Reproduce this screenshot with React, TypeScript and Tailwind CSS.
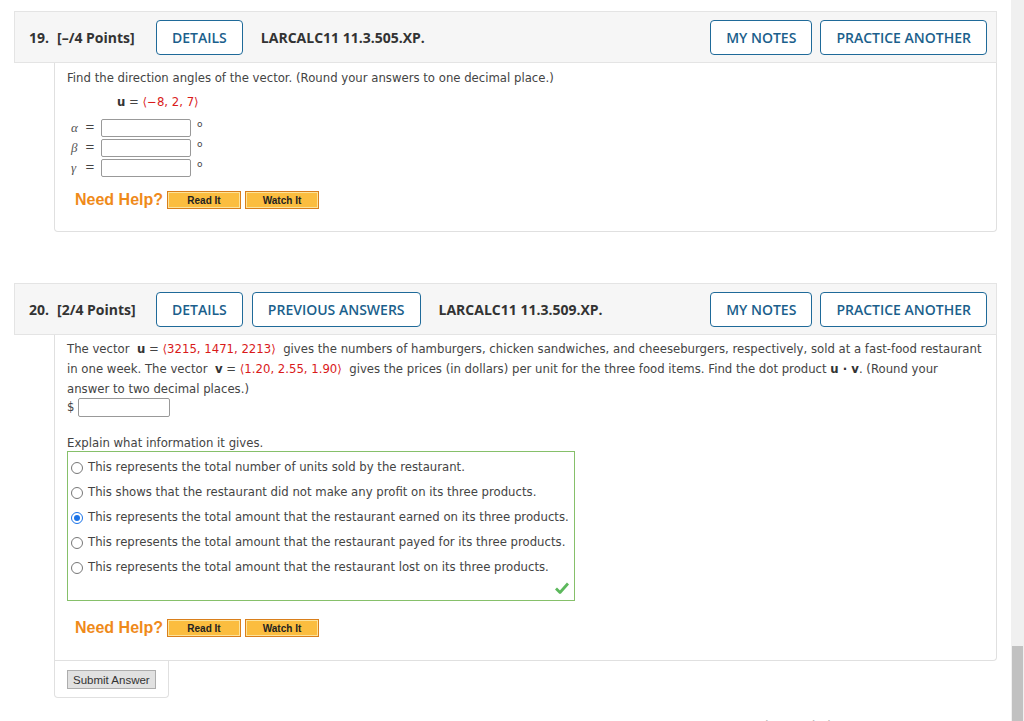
import React from "react"

const hdrBtn =
  "h-[35px] px-[15px] border-[1.5px] border-[#1f6a99] rounded-[4px] bg-white text-[#1b5f8c] text-[14px] font-semibold flex items-center"

function Header({ num, pts, code, prev }: { num: string; pts: string; code: string; prev?: boolean }) {
  return (
    <div className="ml-[14px] w-[983px] h-[52px] bg-[#f6f6f6] border border-[#e4e4e4] flex items-center pl-[14px] pr-[9px] font-['Open_Sans',sans-serif]">
      <span className="text-[14px] font-bold text-[#333] w-[127px] flex gap-[8px]">
        <span>{num}</span>
        <span>{pts}</span>
      </span>
      <button className={hdrBtn}>DETAILS</button>
      {prev && <button className={hdrBtn + " ml-[9px]"}>PREVIOUS ANSWERS</button>}
      <span className="ml-[18px] text-[14px] font-bold text-[#333]">{code}</span>
      <div className="ml-auto flex gap-[8px]">
        <button className={hdrBtn}>MY NOTES</button>
        <button className={hdrBtn}>PRACTICE ANOTHER</button>
      </div>
    </div>
  )
}

function HelpRow() {
  const b =
    "w-[74px] h-[18px] bg-[#fbbd3f] border border-[#d97f1c] shadow-[inset_0_0_0_1px_#fde39b] text-[10px] font-bold text-[#222] font-['Liberation_Sans',Arial,sans-serif] flex items-center justify-center"
  return (
    <div className="flex items-center pl-[8px]">
      <span className="text-[#ef8a1a] font-bold text-[16px] font-['Liberation_Sans',Arial,sans-serif] w-[92px]">Need Help?</span>
      <button className={b}>Read It</button>
      <button className={b + " ml-[4px]"}>Watch It</button>
    </div>
  )
}

function Radio({ on }: { on?: boolean }) {
  return on ? (
    <span className="w-[12px] h-[12px] rounded-full border-[1.5px] border-[#1a73e8] flex items-center justify-center">
      <span className="w-[6px] h-[6px] rounded-full bg-[#1a73e8]" />
    </span>
  ) : (
    <span className="w-[12px] h-[12px] rounded-full border border-[#777] bg-white" />
  )
}

const red = "text-[#d91a1a]"

export default function App() {
  const opts = [
    "This represents the total number of units sold by the restaurant.",
    "This shows that the restaurant did not make any profit on its three products.",
    "This represents the total amount that the restaurant earned on its three products.",
    "This represents the total amount that the restaurant payed for its three products.",
    "This represents the total amount that the restaurant lost on its three products.",
  ]
  return (
    <div className="w-[1024px] h-[721px] overflow-hidden bg-white flex">
      <div className="w-[1011px] relative font-[DejaVu_Sans,Verdana,sans-serif] text-[11.7px] text-[#444]">
        <div className="h-[11px]" />
        <Header num="19." pts="[–/4 Points]" code="LARCALC11 11.3.505.XP." />
        <div className="ml-[54px] w-[943px] h-[169px] border border-t-0 border-[#e0e0e0] rounded-b-[4px] pl-[12px] pt-[6px]">
          <div className="leading-[18px]">Find the direction angles of the vector. (Round your answers to one decimal place.)</div>
          <div className="mt-[6px] ml-[50px] leading-[18px]">
            <b className="text-[#333]">u</b> = <span className={red}>⟨−8, 2, 7⟩</span>
          </div>
          <div className="mt-[8px] flex flex-col gap-[2px]">
            {["α", "β", "γ"].map((g) => (
              <div key={g} className="flex items-center h-[18px]">
                <span className="w-[18px] pl-[4px] italic font-['Liberation_Serif',serif] text-[13px] text-[#555]">{g}</span>
                <span className="w-[16px]">=</span>
                <span className="w-[90px] h-[18px] border border-[#999] rounded-[2px] bg-white" />
                <span className="ml-[6px] text-[9px] -mt-[6px]">o</span>
              </div>
            ))}
          </div>
          <div className="mt-[11px]">
            <HelpRow />
          </div>
        </div>

        <div className="h-[51px]" />
        <Header num="20." pts="[2/4 Points]" code="LARCALC11 11.3.509.XP." prev />
        <div className="ml-[54px] w-[943px] h-[326px] border border-t-0 border-[#e0e0e0] rounded-br-[4px] pl-[12px] pt-[4px]">
          <div className="leading-[20px] pr-[2px]">
            The vector&nbsp; <b className="text-[#333]">u</b> = <span className={red}>⟨3215, 1471, 2213⟩</span>&nbsp; gives the numbers of hamburgers, chicken sandwiches, and cheeseburgers, respectively, sold at a fast-food restaurant in one week. The vector&nbsp; <b className="text-[#333]">v</b> = <span className={red}>⟨1.20, 2.55, 1.90⟩</span>&nbsp; gives the prices (in dollars) per unit for the three food items. Find the dot product <b className="text-[#333]">u · v</b>. (Round your
            <br />
            answer to two decimal places.)
          </div>
          <div className="flex items-center -mt-[1px]">
            <span className="w-[11px]">$</span>
            <span className="w-[92px] h-[19px] border border-[#999] rounded-[2px] bg-white" />
          </div>
          <div className="mt-[17px] leading-[18px]">Explain what information it gives.</div>
          <div className="w-[508px] h-[150px] border border-[#86c06a] -mt-[1px] pt-[3px] relative">
            {opts.map((o, i) => (
              <div key={i} className="flex items-center gap-[5px] h-[25px] pl-[3px]">
                <Radio on={i === 2} />
                <span>{o}</span>
              </div>
            ))}
            <svg className="absolute right-[5px] bottom-[6px]" width="14" height="12" viewBox="0 0 14 12">
              <path d="M1 6.5 L5 10.5 L13 1.5" fill="none" stroke="#5cb85c" strokeWidth="2.8" strokeLinejoin="round" />
            </svg>
          </div>
          <div className="mt-[15px]">
            <HelpRow />
          </div>
        </div>
        <div className="ml-[54px] w-[115px] h-[37px] border border-t-0 border-[#e0e0e0] rounded-b-[4px] pl-[12px] pt-[9px]">
          <button className="h-[19px] px-[5px] bg-[#e1e1e1] border border-[#adadad] text-[11.5px] text-[#333] font-['Liberation_Sans',Arial,sans-serif] leading-[16px]">
            Submit Answer
          </button>
        </div>
        <div className="absolute left-[745px] top-[716px] text-[14px] text-[#b8b8b8] font-['Liberation_Sans',Arial,sans-serif]">
          Activate Windows
        </div>
      </div>
      <div className="w-[13px] h-full bg-[#f0f0f0] flex flex-col">
        <div className="h-[646px]" />
        <div className="flex-1 mx-[1px] bg-[#c1c1c1]" />
      </div>
    </div>
  )
}
